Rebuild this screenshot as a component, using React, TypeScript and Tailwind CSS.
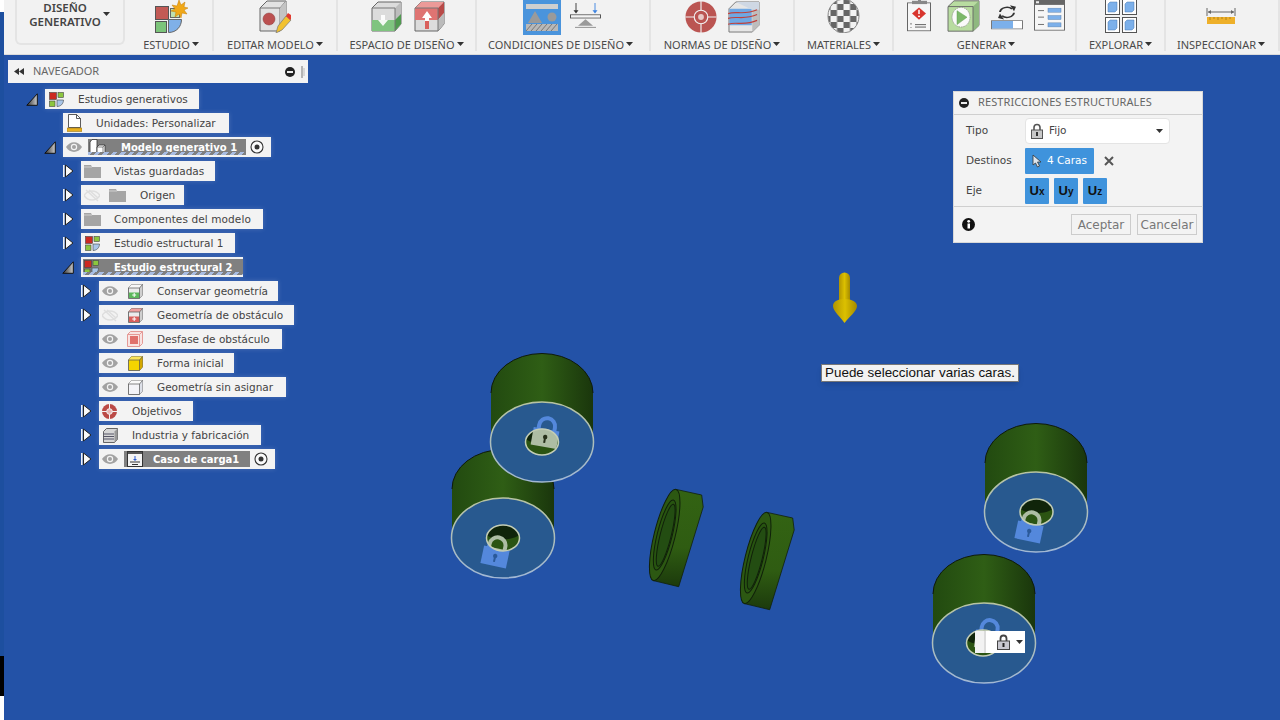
import React from 'react';

const Caret = () => <svg width="7" height="4" viewBox="0 0 7 4" className="ml-[2px] mb-[3px]"><path d="M0 0h7L3.5 4z" fill="#333" /></svg>;

const ToolGroup: React.FC<{ label: string; className: string; iconClass?: string; children: React.ReactNode }> = ({ label, className, iconClass = 'gap-[13px]', children }) => (
  <div className={`flex flex-col items-center h-[51px] border-r-2 border-[#e4e4e4] ${className}`}>
    <div className={`flex items-start shrink-0 h-[38px] ${iconClass}`}>{children}</div>
    <div className="flex items-center shrink-0 h-[14px] text-[11px] text-[#4a4a4a] font-['Noto_Sans',sans-serif] whitespace-nowrap">{label}<Caret /></div>
  </div>
);

const StudyBig = () => (
  <svg width="33" height="33" viewBox="0 0 33 33">
    <rect x="0.500" y="6.500" width="13" height="13" fill="#c25a55" stroke="#555" />
    <rect x="0.500" y="21.500" width="11" height="11" fill="#7cc47a" stroke="#555" />
    <path d="M13.500 19.500h13c0 7-5 13-13 13z" fill="#7fb0e8" stroke="#666" />
    <rect x="15.500" y="8.500" width="9" height="9" fill="#bfe0b0" stroke="#666" />
    <path d="M24 0l2 5 4-3-1 5 4 1-4 2 3 4-5-1-1 5-2-4-4 3 1-5-5-1 4-2-3-4 5 1z" fill="#f0a818" stroke="#c47a00" strokeWidth=".5" />
  </svg>
);

const EditBig = () => (
  <svg width="33" height="33" viewBox="0 0 33 33">
    <path d="M1 8l7-7h19v22l-6 8H1z" fill="#e2e2e2" stroke="#666" />
    <path d="M1 8h20v23M21 8l6-7" fill="none" stroke="#777" />
    <path d="M21 8l6-7v22l-6 8z" fill="#c4c4c4" />
    <circle cx="10" cy="19" r="6" fill="#bb5050" stroke="#8a3a3a" strokeWidth=".5" />
    <path d="M17 33l2-7 8-10 5 4-9 10z" fill="#f2c230" stroke="#777" strokeWidth=".7" />
    <path d="M27 16l2-3 3 2 0 4-1 1z" fill="#e23b30" />
  </svg>
);

const BoxBig: React.FC<{ kind: 'keep' | 'obstacle' }> = ({ kind }) => kind === 'keep' ? (
  <svg width="31" height="31" viewBox="0 0 31 31" className="mt-[1px]">
    <path d="M1 7l6-6h23v22l-6 7H1z" fill="#dcdcdc" stroke="#666" />
    <path d="M24 7l6-6v22l-6 7z" fill="#bdbdbd" />
    <path d="M1 19h23v11H1z" fill="#7fc47f" />
    <path d="M24 19l6-6v10l-6 7z" fill="#4f9a4f" />
    <path d="M1 7h23v23" fill="none" stroke="#777" />
    <path d="M10 12h4v5h3l-5 6-5-6h3z" fill="#fff" opacity=".9" transform="translate(0 2)" />
  </svg>
) : (
  <svg width="31" height="31" viewBox="0 0 31 31" className="mt-[1px]">
    <path d="M1 7l6-6h23v22l-6 7H1z" fill="#dcdcdc" stroke="#666" />
    <path d="M1 7l6-6h23l-6 6z" fill="#ec9a98" />
    <path d="M1 7h23v12H1z" fill="#df7472" />
    <path d="M24 7l6-6v11l-6 7z" fill="#b84a48" />
    <path d="M24 19l6-7v11l-6 7z" fill="#bbb" />
    <path d="M1 7h23v23" fill="none" stroke="#777" />
    <path d="M11 28v-11H8l5-7 5 7h-3v11z" fill="#d9605c" />
    <path d="M11 20v-3H8l5-7 5 7h-3v3z" fill="#fff" />
  </svg>
);

const ConditionOn = () => (
  <div className="w-[38px] h-[35px] bg-[#4a94dc] flex items-center justify-center">
    <svg width="32" height="27" viewBox="0 0 32 27">
      <rect y="0" width="32" height="5" fill="#cfcfcf" />
      <path d="M2 19l7-12 7 12z" fill="#9a9a9a" />
      <circle cx="26" cy="13" r="4.500" fill="#9a9a9a" />
      <rect y="20" width="32" height="7" fill="#b8b8b8" />
      <path d="M0 27l6-7M5 27l6-7M10 27l6-7M15 27l6-7M20 27l6-7M25 27l6-7" stroke="#666" strokeWidth=".8" />
    </svg>
  </div>
);

const ConditionOff = () => (
  <svg width="31" height="26" viewBox="0 0 31 32" preserveAspectRatio="none" className="mt-[3px]">
    <path d="M6 0v11" stroke="#333" />
    <path d="M3.500 9h5L6 13z" fill="#333" />
    <path d="M25 0v11" stroke="#3b82e0" />
    <path d="M22.500 9h5L25 13z" fill="#3b82e0" />
    <rect x="0.500" y="14.500" width="30" height="4" fill="#f4f4f4" stroke="#555" />
    <path d="M8 28l7.500-8 7.500 8z" fill="#9a9a9a" />
    <path d="M5 30h21" stroke="#888" />
  </svg>
);

const TargetBig = () => (
  <svg width="32" height="32" viewBox="0 0 32 33" className="mt-[1px]">
    <ellipse cx="16" cy="16.500" rx="16" ry="16" fill="#bb5552" />
    <path d="M16 0v11M16 22v11M0 16.500h11M21 16.500h11" stroke="#f2f2f2" strokeWidth="1.200" />
    <circle cx="16" cy="16.500" r="7" fill="#bb5552" stroke="#f2f2f2" strokeWidth="1.200" />
    <circle cx="16" cy="16.500" r="3" fill="#e8c8c6" />
  </svg>
);

const MfgBig = () => (
  <svg width="32" height="32" viewBox="0 0 33 33" className="mt-[1px]">
    <path d="M1 8l7-7h24v24l-7 7H1z" fill="#e6e6e6" stroke="#777" />
    <path d="M25 8l7-7v24l-7 7z" fill="#bdbdbd" />
    <rect x="1.500" y="8" width="23" height="17" fill="#6fa8e4" />
    <path d="M8 1h24v8H25z" fill="#cfd8e4" />
    <path d="M0 13c8-3 17 2 30-4M0 18c8-3 17 2 30-4M0 24c8-3 17 2 30-4" fill="none" stroke="#c0403c" strokeWidth="1.200" />
  </svg>
);

const Checker = () => (
  <svg width="33" height="33" viewBox="0 0 33 33">
    <defs>
      <pattern id="chk" width="13" height="12" patternUnits="userSpaceOnUse" patternTransform="translate(3.500 -2)">
        <rect width="13" height="12" fill="#f2f2f2" />
        <rect width="6.500" height="6" fill="#666" />
        <rect x="6.500" y="6" width="6.500" height="6" fill="#666" />
      </pattern>
    </defs>
    <ellipse cx="16.500" cy="16" rx="15.500" ry="17" fill="url(#chk)" stroke="#888" />
  </svg>
);

const ClipAlert = () => (
  <svg width="25" height="32" viewBox="0 0 25 39" preserveAspectRatio="none">
    <rect x="0.500" y="3.500" width="23" height="34" fill="#f6f6f6" stroke="#666" />
    <rect x="5" y="1" width="15" height="4" fill="#888" />
    <rect x="11" y="0" width="3" height="3" fill="#888" />
    <path d="M12 9l7 7.500-7 7.500-7-7.500z" fill="#d8352e" />
    <path d="M12 12v5" stroke="#fff" strokeWidth="1.500" />
    <circle cx="12" cy="20" r="1" fill="#fff" />
    <path d="M4 28v2M4 33v1M8 30h11M8 33h11" stroke="#555" />
  </svg>
);

const PlayBox = () => (
  <svg width="33" height="32" viewBox="0 0 33 39" preserveAspectRatio="none" className="ml-[4px]">
    <path d="M1 8l6-7h25v30l-6 7H1z" fill="#b8dca0" stroke="#666" />
    <path d="M26 8l6-7v30l-6 7z" fill="#8fb880" />
    <path d="M1 8h25v30" fill="none" stroke="#666" />
    <ellipse cx="14" cy="21" rx="9" ry="12" fill="#fafafa" stroke="#9a9a9a" strokeDasharray="1.500 1" />
    <path d="M10 13l10 8-10 9z" fill="#7cb86a" stroke="#5a9a4a" strokeWidth=".5" />
  </svg>
);

const Refresh = () => (
  <svg width="32" height="27" viewBox="0 0 32 36" preserveAspectRatio="none" className="mt-[3px]">
    <path d="M9 12a7 7 0 0 1 12-4" fill="none" stroke="#333" strokeWidth="2" />
    <path d="M19 3l6 2-2 6z" fill="#333" />
    <path d="M23 13a7 7 0 0 1-12 4" fill="none" stroke="#333" strokeWidth="2" />
    <path d="M13 22l-6-2 2-6z" fill="#333" />
    <rect x="0.500" y="23.500" width="31" height="11" fill="#fff" stroke="#777" />
    <rect x="1" y="24" width="21" height="10" fill="#7cb0ea" />
  </svg>
);

const ListWin = () => (
  <svg width="31" height="31" viewBox="0 0 31 38" preserveAspectRatio="none">
    <rect x="0.500" y="0" width="30" height="37" fill="#f6f6f6" stroke="#666" />
    <rect x="0" y="0" width="31" height="6" fill="#666" />
    <rect x="2" y="1.500" width="3" height="2.500" fill="#eee" />
    <path d="M4 13h6M4 21h6M4 30h6" stroke="#666" />
    <rect x="14" y="10" width="13" height="5" fill="#7cb0ea" stroke="#5a7ea8" strokeWidth=".5" />
    <rect x="14" y="19" width="13" height="5" fill="#7cb0ea" stroke="#5a7ea8" strokeWidth=".5" />
    <rect x="14" y="28" width="13" height="5" fill="#7cb0ea" stroke="#5a7ea8" strokeWidth=".5" />
  </svg>
);

const Explore = () => {
  const cell = (x: number, y: number) => (
    <g key={`${x}-${y}`} transform={`translate(${x} ${y})`}>
      <rect x="0.500" y="0.500" width="14" height="15" fill="#fff" stroke="#555" />
      <path d="M3 5l2-2h7v8l-2 2H3z" fill="#7cb0ea" stroke="#4a78b0" strokeWidth=".5" />
    </g>
  );
  return <svg width="32" height="33" viewBox="0 0 32 33">{cell(0, -1)}{cell(17, -1)}{cell(0, 17)}{cell(17, 17)}</svg>;
};

const Ruler = () => (
  <svg width="30" height="16" viewBox="0 0 30 16" className="mt-[8px]">
    <path d="M1 0v8M29 0v8M2 4h26" stroke="#666" />
    <path d="M2 4l3-2v4zM28 4l-3-2v4z" fill="#666" />
    <rect x="1" y="9" width="28" height="7" fill="#eeb02a" />
    <path d="M4 9v3M8 9v2M12 9v3M16 9v2M20 9v3M24 9v2" stroke="#9a7010" strokeWidth=".7" />
  </svg>
);

const Toolbar = () => (
  <div className="flex h-[55px] bg-[#f2f2f2] border-b border-[#dcdcdc] overflow-hidden">
    <div className="w-[129px] pl-[11px]">
      <div className="relative flex flex-col items-center w-[110px] h-[45px] pt-[1px] pr-[10px] bg-[#f2f2f2] border-2 border-t-0 border-[#e4e4e4] rounded-b-md text-[11.500px] leading-[14px] font-semibold text-[#444] font-['Noto_Sans',sans-serif]">
        <span>DISEÑO</span>
        <span>GENERATIVO</span>
        <svg width="7" height="4" viewBox="0 0 7 4" className="absolute right-[13px] top-[12px]"><path d="M0 0h7L3.500 4z" fill="#333" /></svg>
      </div>
    </div>
    <ToolGroup label="ESTUDIO" className="w-[81px] pr-[3px]"><StudyBig /></ToolGroup>
    <ToolGroup label="EDITAR MODELO" className="w-[124px]"><EditBig /></ToolGroup>
    <ToolGroup label="ESPACIO DE DISEÑO" className="w-[139px]" iconClass="gap-[12px] ml-[3px]"><BoxBig kind="keep" /><BoxBig kind="obstacle" /></ToolGroup>
    <ToolGroup label="CONDICIONES DE DISEÑO" className="w-[174px] pr-[5px]" iconClass="gap-[9px] ml-[2px]"><ConditionOn /><ConditionOff /></ToolGroup>
    <ToolGroup label="NORMAS DE DISEÑO" className="w-[144px]" iconClass="gap-[11px]"><TargetBig /><MfgBig /></ToolGroup>
    <ToolGroup label="MATERIALES" className="w-[99px]"><Checker /></ToolGroup>
    <ToolGroup label="GENERAR" className="w-[183px] pl-[3px]" iconClass="gap-[11px]"><ClipAlert /><PlayBox /><Refresh /><ListWin /></ToolGroup>
    <ToolGroup label="EXPLORAR" className="w-[89px]"><Explore /></ToolGroup>
    <ToolGroup label="INSPECCIONAR" className="w-[114px] pr-[2px]"><Ruler /></ToolGroup>
  </div>
);

/* tree icons */
const Study = () => (
  <svg width="15" height="15" viewBox="0 0 15 15" className="shrink-0">
    <rect x="0.500" y="0.500" width="7" height="7" fill="#cc2a22" stroke="#444" strokeWidth=".6" />
    <rect x="9" y="0.500" width="5.500" height="5" fill="#8cc63e" stroke="#444" strokeWidth=".6" />
    <rect x="0.500" y="9" width="5.500" height="5.500" fill="#8cc63e" stroke="#444" strokeWidth=".6" />
    <path d="M8 8h6.500c0 4-3 6.500-6.500 6.500z" fill="#a9c6e8" stroke="#444" strokeWidth=".6" />
  </svg>
);
const Eye = () => (
  <svg width="16" height="10" viewBox="0 0 16 10" className="shrink-0"><path d="M0 5c4-6.500 12-6.500 16 0-4 6.500-12 6.500-16 0z" fill="#a2a2a2" /><circle cx="8" cy="5" r="3.200" fill="#f3f3f3" /><circle cx="8" cy="5" r="2" fill="#a2a2a2" /></svg>
);
const EyeOff = () => (
  <svg width="16" height="13" viewBox="0 0 16 13" className="shrink-0"><path d="M0 6.500c4-6 12-6 16 0-4 6-12 6-16 0z" fill="none" stroke="#dedede" strokeWidth="1.500" /><path d="M2 1l12 11M5 1l9 8" stroke="#dedede" strokeWidth="1.500" /></svg>
);
const Folder = () => (
  <svg width="17" height="14" viewBox="0 0 17 14" className="shrink-0"><path d="M0 1h7l1 2h9v11H0z" fill="#a5a5a5" /><path d="M0 3h8" stroke="#d0d0d0" /></svg>
);
const Radio = () => (
  <svg width="14" height="14" viewBox="0 0 14 14" className="shrink-0"><circle cx="7" cy="7" r="6" fill="#fafafa" stroke="#333" strokeWidth="1.100" /><circle cx="7" cy="7" r="2.500" fill="#333" /></svg>
);
const Doc = () => (
  <svg width="15" height="18" viewBox="0 0 15 18" className="shrink-0"><path d="M1.500 0.500h8l4 4v9h-12z" fill="#fff" stroke="#333" strokeWidth=".8" /><path d="M9.500 .5v4h4" fill="none" stroke="#333" strokeWidth=".8" /><rect x="0" y="14" width="15" height="3.500" fill="#e8b020" stroke="#8a6a10" strokeWidth=".5" /></svg>
);
const ModelI = () => (
  <svg width="17" height="16" viewBox="0 0 17 16" className="shrink-0"><path d="M1 3l2-2.500h5v15H1z" fill="#fff" stroke="#333" strokeWidth=".8" /><path d="M8 8l2-2h6v7l-2 2.500H8z" fill="#fff" stroke="#333" strokeWidth=".8" /><path d="M8 8h6v7M14 8l2-2" fill="none" stroke="#333" strokeWidth=".6" /></svg>
);
const Cube: React.FC<{ face: string; top: string; side: string; stroke?: string; band?: string }> = ({ face, top, side, stroke = '#555', band }) => (
  <svg width="15" height="15" viewBox="0 0 15 15" className="shrink-0">
    <path d="M.5 4l3-3.500h11V11l-3 3.500H.5z" fill={face} stroke={stroke} strokeWidth=".8" />
    <path d="M.5 4l3-3.500h11l-3 3.500z" fill={top} />
    <path d="M11.500 4l3-3.500V11l-3 3.500z" fill={side} />
    {band && <rect x="1" y="8.500" width="10.500" height="5.500" fill={band} />}
    {band && <path d="M6.200 9v4M4.200 11h4" stroke="#fff" />}
    <path d="M.5 4h11v10.500M11.500 4l3-3.500" fill="none" stroke={stroke} strokeWidth=".7" />
  </svg>
);
const Offset = () => (
  <svg width="16" height="16" viewBox="0 0 16 16" className="shrink-0"><path d="M.5 3.500l3-3h12v12l-3 3H.5z" fill="#f8e4e2" stroke="#e59a96" /><rect x="3" y="5" width="8" height="8" fill="#e0716c" /><path d="M.5 3.500h12v12M12.500 3.500l3-3" fill="none" stroke="#e59a96" /></svg>
);
const Objective = () => (
  <svg width="15" height="15" viewBox="0 0 15 15" className="shrink-0"><circle cx="7.500" cy="7.500" r="7.500" fill="#bb4a46" /><path d="M7.500 0v5M7.500 10v5M0 7.500h5M10 7.500h5" stroke="#f3f3f3" /><circle cx="7.500" cy="7.500" r="2.800" fill="#e8b8b6" stroke="#f3f3f3" /></svg>
);
const Mfg = () => (
  <svg width="15" height="15" viewBox="0 0 15 15" className="shrink-0"><path d="M.5 3.500l3-3h11v11l-3 3H.5z" fill="#d6d6d6" stroke="#444" strokeWidth=".8" /><path d="M11.500 3.500l3-3v11l-3 3z" fill="#999" /><path d="M0 6h11M0 8.500h11M0 11h11" stroke="#556" /></svg>
);
const LoadCase = () => (
  <svg width="16" height="16" viewBox="0 0 16 16" className="shrink-0"><rect x=".5" y=".5" width="15" height="15" fill="#f4f4f4" stroke="#333" /><rect x="1" y="1" width="14" height="2" fill="#555" /><path d="M8 5v4" stroke="#2a5bd0" /><path d="M6 8h4l-2 2z" fill="#2a5bd0" /><path d="M3 11h10M5 13.500h6" stroke="#333" /></svg>
);

const ArrowOpen = () => (
  <svg width="12" height="13" viewBox="0 0 12 13" className="shrink-0">
    <defs><linearGradient id="tri" x1="0" y1="0" x2="1" y2="0"><stop offset="0" stopColor="#333" /><stop offset="1" stopColor="#ccc" /></linearGradient></defs>
    <path d="M.8 12.300L11.300 .8v11.500z" fill="url(#tri)" stroke="#111" strokeWidth="1" />
  </svg>
);
const ArrowClosed = () => (
  <svg width="11" height="14" viewBox="0 0 11 14" className="shrink-0">
    <path d="M2.500 1L10 7l-7.500 6z" fill="#f8f8f8" stroke="#222" strokeWidth="1" />
    <path d="M.8 1v12" stroke="#f8f8f8" strokeWidth="1.500" />
  </svg>
);

const Hatch = () => <div className="absolute left-0 right-0 bottom-0 h-[3px] bg-[repeating-linear-gradient(135deg,#a9bde2_0,#a9bde2_3px,#808080_3px,#808080_6px)]" />;

const Row: React.FC<{ indent: string; arrow?: 'open' | 'closed'; box: string; children: React.ReactNode }> = ({ indent, arrow, box, children }) => (
  <div className={`relative flex items-center h-5 ${indent}`}>
    <div className="absolute -left-[20px] top-0 flex h-5 w-[14px] items-center justify-center">
      {arrow === 'open' && <ArrowOpen />}
      {arrow === 'closed' && <ArrowClosed />}
    </div>
    <div className={`flex items-center h-5 bg-[#f3f3f3] shadow-[0_0_5px_rgba(255,255,255,0.18)] text-[10.500px] leading-[17px] text-[#444] whitespace-nowrap ${box}`}>{children}</div>
  </div>
);

const Tree = () => (
  <div className="flex flex-col gap-1 mt-[6px] font-['DejaVu_Sans',sans-serif]">
    <Row indent="ml-[41px]" arrow="open" box="w-[154px] pl-1"><Study /><span className="ml-[14px] pt-[1px]">Estudios generativos</span></Row>
    <Row indent="ml-[59px]" box="w-[166px] pl-[4px]"><Doc /><span className="ml-[14px] pt-[1px]">Unidades: Personalizar</span></Row>
    <Row indent="ml-[59px]" arrow="open" box="w-[208px] pl-[3px]">
      <Eye />
      <div className="relative flex items-center ml-[6px] w-[158px] h-4 bg-[#808080] pl-[1px] text-white text-[10px] font-bold">
        <ModelI /><span className="ml-[15px] pt-[1px]">Modelo generativo 1</span><Hatch />
      </div>
      <span className="ml-[4px]"><Radio /></span>
    </Row>
    <Row indent="ml-[77px]" arrow="closed" box="w-[134px] pl-[3px]"><Folder /><span className="ml-[13px] pt-[1px]">Vistas guardadas</span></Row>
    <Row indent="ml-[77px]" arrow="closed" box="w-[103px] pl-[3px]"><EyeOff /><span className="ml-[9px]"><Folder /></span><span className="ml-[14px] pt-[1px]">Origen</span></Row>
    <Row indent="ml-[77px]" arrow="closed" box="w-[182px] pl-[3px]"><Folder /><span className="ml-[13px] pt-[1px] tracking-[0.1px]">Componentes del modelo</span></Row>
    <Row indent="ml-[77px]" arrow="closed" box="w-[154px] pl-[4px]"><Study /><span className="ml-[14px] pt-[1px]">Estudio estructural 1</span></Row>
    <Row indent="ml-[77px]" arrow="open" box="w-[162px] pl-[2px] py-[2px]">
      <div className="relative flex items-center w-full h-4 bg-[#808080] pl-[1px] text-white text-[10px] font-bold">
        <Study /><span className="ml-[15px] pt-[1px]">Estudio estructural 2</span><Hatch />
      </div>
    </Row>
    <Row indent="ml-[95px]" arrow="closed" box="w-[179px] pl-[3px]"><Eye /><span className="ml-[10px]"><Cube face="#ececec" top="#f8f8f8" side="#cfcfcf" band="#5cb85c" /></span><span className="ml-[14px] pt-[1px]">Conservar geometría</span></Row>
    <Row indent="ml-[95px]" arrow="closed" box="w-[195px] pl-[3px]"><EyeOff /><span className="ml-[10px]"><Cube face="#ececec" top="#f0a09e" side="#cfcfcf" band="#d9605c" /></span><span className="ml-[14px] pt-[1px]">Geometría de obstáculo</span></Row>
    <Row indent="ml-[95px]" box="w-[183px] pl-[3px]"><Eye /><span className="ml-[9px]"><Offset /></span><span className="ml-[14px] pt-[1px]">Desfase de obstáculo</span></Row>
    <Row indent="ml-[95px]" box="w-[135px] pl-[3px]"><Eye /><span className="ml-[10px]"><Cube face="#f4d400" top="#fae35a" side="#d4a800" /></span><span className="ml-[14px] pt-[1px]">Forma inicial</span></Row>
    <Row indent="ml-[95px]" box="w-[187px] pl-[3px]"><Eye /><span className="ml-[10px]"><Cube face="#f4f4f8" top="#fafafa" side="#dde0e8" /></span><span className="ml-[14px] pt-[1px]">Geometría sin asignar</span></Row>
    <Row indent="ml-[95px]" arrow="closed" box="w-[94px] pl-[3px]"><Objective /><span className="ml-[15px] pt-[1px]">Objetivos</span></Row>
    <Row indent="ml-[95px]" arrow="closed" box="w-[162px] pl-[4px]"><Mfg /><span className="ml-[14px] pt-[1px]">Industria y fabricación</span></Row>
    <Row indent="ml-[95px]" arrow="closed" box="w-[176px] pl-[3px]">
      <Eye />
      <div className="flex items-center ml-[6px] w-[126px] h-4 bg-[#808080] pl-[3px] text-white text-[10px] font-bold"><LoadCase /><span className="ml-[10px] pt-[1px]">Caso de carga1</span></div>
      <span className="ml-[4px]"><Radio /></span>
    </Row>
  </div>
);

const Navigator = () => (
  <div className="flex items-center w-[300px] h-[23px] ml-1 mt-[5px] bg-[#f3f3f3] pl-[6px] pr-[3px]">
    <svg width="10" height="7" viewBox="0 0 10 7"><path d="M5 0v7L0 3.500zM10 0v7L5 3.500z" fill="#333" /></svg>
    <span className="ml-[9px] text-[11px] text-[#666] font-['Noto_Sans',sans-serif]">NAVEGADOR</span>
    <svg width="10" height="10" viewBox="0 0 10 10" className="ml-auto"><circle cx="5" cy="5" r="5" fill="#222" /><rect x="2" y="4" width="6" height="2" fill="#eee" /></svg>
    <svg width="4" height="12" viewBox="0 0 4 12" className="ml-[6px]"><path d="M1 0v12" stroke="#777" /><path d="M3 2v8" stroke="#bbb" /></svg>
  </div>
);

const Lock: React.FC<{ x: number; y: number; rot: number; body: string; hole: string }> = ({ x, y, rot, body, hole }) => (
  <g transform={`translate(${x} ${y}) rotate(${rot})`}>
    <path d="M-8 -8v-4a8 8 0 0 1 16 0v4" fill="none" stroke={body} strokeWidth="4" />
    <rect x="-13" y="-9" width="26" height="18" fill={body} />
    <circle cx="0" cy="-1" r="2.200" fill={hole} />
    <rect x="-1" y="-1" width="2" height="6" fill={hole} />
  </g>
);

const Cylinder: React.FC<{ id: string; cx: number; cy: number; hx: number; hy: number; lock: { x: number; y: number; rot: number } }> = ({ id, cx, cy, hx, hy, lock }) => {
  const crescent = `M${hx - 17} ${hy - 4}C${hx - 12} ${hy + 3} ${hx + 12} ${hy + 3} ${hx + 17} ${hy - 4}V${hy - 14}H${hx - 17}z`;
  return (
    <g>
      <path d={`M${cx - 51} ${cy - 49}A51 39.500 0 0 1 ${cx + 51} ${cy - 49}V${cy}H${cx - 51}z`} fill="url(#cyl)" />
      <path d={`M${cx - 51} ${cy - 49}A51 39.500 0 0 1 ${cx + 51} ${cy - 49}`} fill="none" stroke="#0e1a0a" strokeWidth="1" />
      <ellipse cx={cx} cy={cy} rx="51.500" ry="40" fill="#28598f" stroke="url(#rim)" strokeWidth="1.500" />
      <clipPath id={id}><ellipse cx={hx} cy={hy} rx="16.500" ry="13" /></clipPath>
      <Lock {...lock} body="#5488dc" hole="#2b5a9a" />
      <g clipPath={`url(#${id})`}>
        <ellipse cx={hx} cy={hy} rx="16.500" ry="13" fill="#2b5412" />
        <path d={crescent} fill="#10240a" />
        <Lock {...lock} body="#aebda4" hole="#26301a" />
      </g>
      <ellipse cx={hx} cy={hy} rx="16.500" ry="13" fill="none" stroke="#c3cdb6" strokeWidth="1.500" />
    </g>
  );
};

const Ring: React.FC<{ x: number; y: number }> = ({ x, y }) => (
  <g transform={`translate(${x} ${y})`}>
    <path d="M11.400 -45.600L37 -40L38.500 -28L14 51.700L-11.400 45.600Z" fill="url(#ring)" stroke="#10200a" strokeWidth=".8" strokeLinejoin="round" />
    <g transform="rotate(14)">
      <ellipse cx="0" cy="0" rx="10.500" ry="47" fill="#2c5812" stroke="#10200a" strokeWidth="1" />
      <ellipse cx="0" cy="0" rx="7.500" ry="36" fill="#275410" stroke="#10200a" strokeWidth="1" />
      <ellipse cx="1" cy="0" rx="5.500" ry="32" fill="#234d12" stroke="#10200a" strokeWidth="1" />
    </g>
  </g>
);

const Scene = () => (
  <svg viewBox="4 55 1276 665" width="1276" height="665" className="absolute left-0 top-0">
    <defs>
      <linearGradient id="cyl" x1="0" y1="0" x2="1" y2="0">
        <stop offset="0" stopColor="#224a10" />
        <stop offset=".5" stopColor="#2f5e15" />
        <stop offset="1" stopColor="#1a360c" />
      </linearGradient>
      <linearGradient id="rim" x1="0" y1="0" x2="0" y2="1">
        <stop offset="0" stopColor="#b8c4a2" />
        <stop offset="1" stopColor="#a2b8d4" />
      </linearGradient>
      <linearGradient id="ring" x1="0" y1="0" x2="0" y2="1">
        <stop offset="0" stopColor="#336313" />
        <stop offset=".6" stopColor="#2f5c12" />
        <stop offset="1" stopColor="#1c3a0c" />
      </linearGradient>
      <linearGradient id="gold" x1="0" y1="0" x2="1" y2="0">
        <stop offset="0" stopColor="#b09400" />
        <stop offset=".5" stopColor="#dcc000" />
        <stop offset="1" stopColor="#a48a00" />
      </linearGradient>
    </defs>
    <Cylinder id="hb" cx={503} cy={538} hx={503} hy={538} lock={{ x: 495, y: 557, rot: 12 }} />
    <Cylinder id="ha" cx={542} cy={442} hx={542} hy={442} lock={{ x: 545, y: 438, rot: 10 }} />
    <Cylinder id="hc" cx={1036} cy={512} hx={1036.500} hy={512} lock={{ x: 1029, y: 532, rot: 12 }} />
    <Cylinder id="hd" cx={984} cy={643} hx={983} hy={643} lock={{ x: 988, y: 640, rot: 8 }} />
    <Ring x={664.700} y={535} />
    <Ring x={755.700} y={558} />
    <path d="M839 278a5.500 5.500 0 0 1 11 0v22h-11z" fill="url(#gold)" />
    <path d="M833 306c0-4 4-7 11.500-7s12.500 3 12.500 7c0 5-8 11-12.500 17-4-6-11.500-12-11.500-17z" fill="url(#gold)" />
  </svg>
);

const Panel = () => (
  <div className="absolute left-[949px] top-[36px] w-[250px] h-[152px] bg-[#f3f3f3] border border-[#d8d8d8] flex flex-col text-[10.500px] text-[#444] font-['DejaVu_Sans',sans-serif]">
    <div className="flex items-center h-[23px] pl-[5px] pb-[1px] border-b border-[#cfcfcf]">
      <svg width="10" height="10" viewBox="0 0 10 10"><circle cx="5" cy="5" r="5" fill="#222" /><rect x="2" y="4" width="6" height="2" fill="#eee" /></svg>
      <span className="ml-[9px] text-[11px] tracking-[0.1px] text-[#666] font-['Noto_Sans',sans-serif]">RESTRICCIONES ESTRUCTURALES</span>
    </div>
    <div className="flex flex-col gap-1 pl-[12px] pt-[3px] h-[92px] border-b border-[#cfcfcf]">
      <div className="flex items-center h-[26px]">
        <span className="w-[59px]">Tipo</span>
        <div className="flex items-center w-[145px] h-[26px] bg-white border border-[#e4e4e4] rounded-sm pl-[5px] pr-[6px]">
          <svg width="12" height="16" viewBox="0 0 12 16"><path d="M3 7V4.500a3 3 0 0 1 6 0V7" fill="none" stroke="#555" strokeWidth="1.600" /><rect x="0.500" y="7" width="11" height="8.500" fill="#c8c8c8" stroke="#555" /><rect x="5" y="9" width="2" height="4" fill="#333" /></svg>
          <span className="ml-[6px]">Fijo</span>
          <svg width="7" height="4" viewBox="0 0 7 4" className="ml-auto"><path d="M0 0h7L3.500 4z" fill="#333" /></svg>
        </div>
      </div>
      <div className="flex items-center h-[26px]">
        <span className="w-[59px]">Destinos</span>
        <div className="flex items-center w-[69px] h-[26px] bg-[#3f93dc] rounded-[1px] pl-[7px] text-white">
          <svg width="10" height="14" viewBox="0 0 10 14"><path d="M1 1v10l2.500-2 2 4 2-1-2-4h3.500z" fill="#dde6ee" stroke="#333" strokeWidth=".8" /></svg>
          <span className="ml-[5px]">4 Caras</span>
        </div>
        <svg width="10" height="10" viewBox="0 0 10 10" className="ml-[10px]"><path d="M1 1l8 8M9 1l-8 8" stroke="#555" strokeWidth="2" /></svg>
      </div>
      <div className="flex items-center h-[26px]">
        <span className="w-[59px]">Eje</span>
        <div className="flex gap-[5px] font-bold text-[#111] font-['Liberation_Sans',sans-serif]">
          <div className="flex items-center justify-center w-6 h-[26px] bg-[#3f93dc] rounded-[1px] text-[13px]">U<span className="text-[10px]">x</span></div>
          <div className="flex items-center justify-center w-6 h-[26px] bg-[#3f93dc] rounded-[1px] text-[13px]">U<span className="text-[10px]">y</span></div>
          <div className="flex items-center justify-center w-6 h-[26px] bg-[#3f93dc] rounded-[1px] text-[13px]">U<span className="text-[10px]">z</span></div>
        </div>
      </div>
    </div>
    <div className="flex flex-1 items-center pl-[8px] pr-[5px]">
      <svg width="13" height="13" viewBox="0 0 13 13"><circle cx="6.500" cy="6.500" r="6.500" fill="#111" /><rect x="5.500" y="5.500" width="2.500" height="5" fill="#fff" /><circle cx="6.700" cy="3.300" r="1.400" fill="#fff" /></svg>
      <div className="ml-auto flex gap-[6px] text-[12px] text-[#777]">
        <div className="flex items-center justify-center w-[60px] h-[21px] border border-[#ccc]">Aceptar</div>
        <div className="flex items-center justify-center w-[60px] h-[21px] border border-[#ccc]">Cancelar</div>
      </div>
    </div>
  </div>
);

export default function App() {
  return (
    <div className="flex w-[1280px] h-[720px] overflow-hidden bg-white">
      <div className="flex flex-col w-1 h-full">
        <div className="h-3 bg-white" />
        <div className="h-[644px] bg-[#1d4f9f]" />
        <div className="h-10 bg-black" />
        <div className="flex-1 bg-white" />
      </div>
      <div className="flex flex-col flex-1">
        <Toolbar />
        <div className="relative flex-1 bg-[#2352a7]">
          <Scene />
          <div className="relative flex flex-col">
            <Navigator />
            <Tree />
          </div>
          <Panel />
          <div className="absolute left-[817px] top-[309px] flex items-center justify-center w-[198px] h-[18px] pt-[1px] bg-[#f2f2f2] border border-[#777] shadow-md text-[13.400px] text-[#111] font-['Liberation_Sans',sans-serif]">Puede seleccionar varias caras.</div>
          <div className="absolute left-[971px] top-[576px] flex items-center w-[50px] h-[22px] bg-white">
            <div className="w-[11px] h-full border-r-2 border-[#dcdcdc] bg-[#f2f2f2]" />
            <svg width="13" height="16" viewBox="0 0 13 16" className="ml-[11px]"><path d="M3.500 7V4.500a3 3 0 0 1 6 0V7" fill="none" stroke="#444" strokeWidth="1.800" /><rect x="0.500" y="7" width="12" height="8.500" fill="#c8c8d0" stroke="#444" /><rect x="5.500" y="9" width="2" height="4" fill="#222" /></svg>
            <svg width="7" height="4" viewBox="0 0 7 4" className="ml-[6px]"><path d="M0 0h7L3.500 4z" fill="#333" /></svg>
          </div>
        </div>
      </div>
    </div>
  );
}
